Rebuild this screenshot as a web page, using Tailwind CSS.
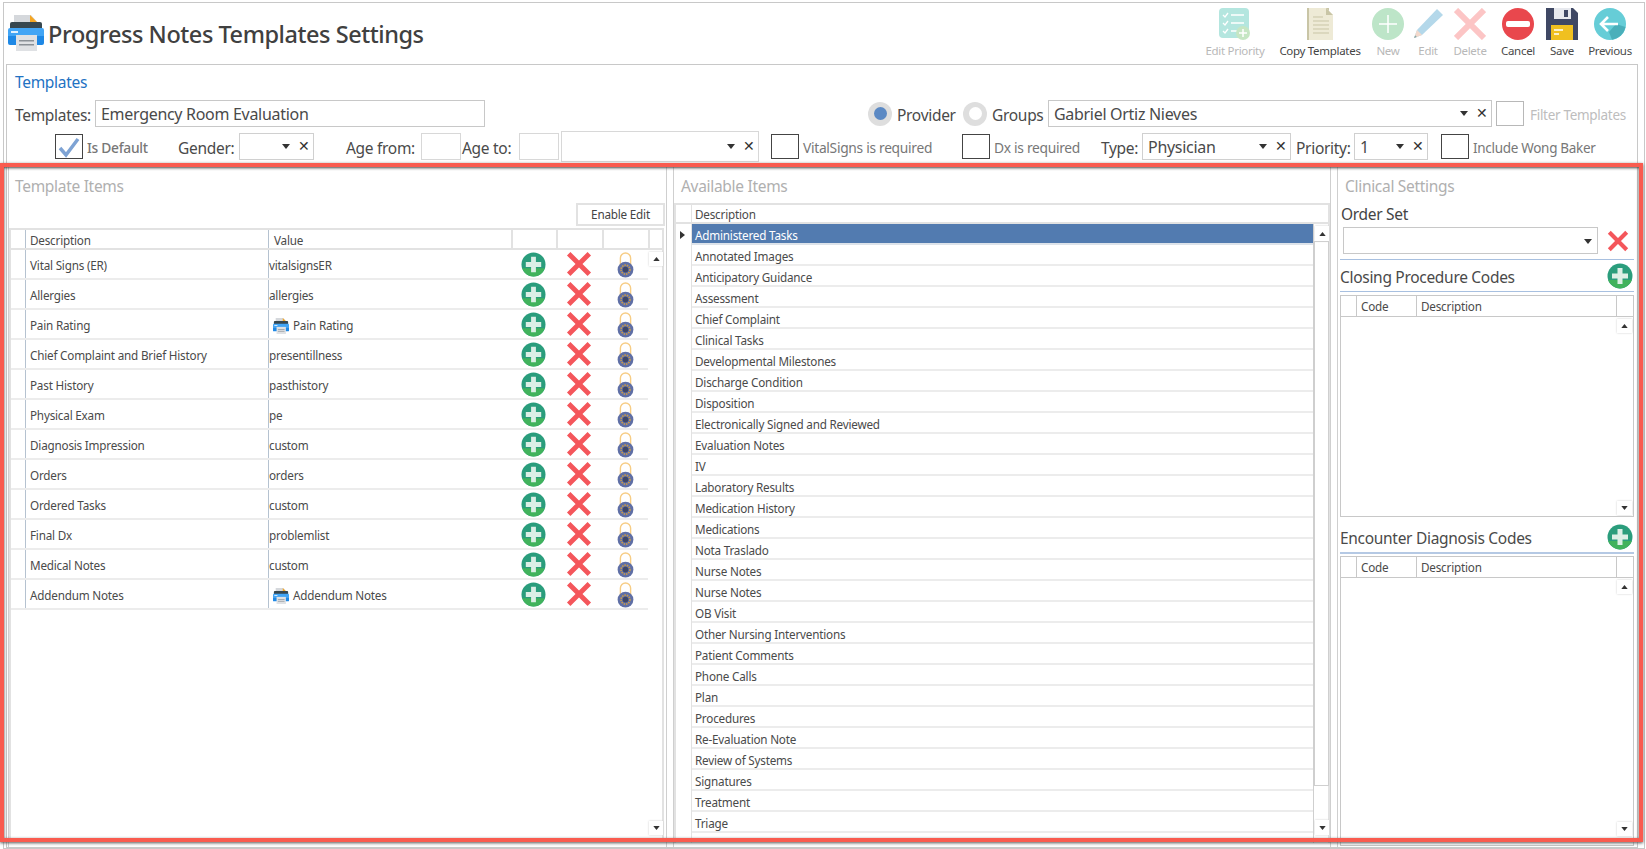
<!DOCTYPE html>
<html lang="en">
<head>
<meta charset="UTF-8" />
<title>Progress Notes Templates Settings</title>
<script src="https://cdn.jsdelivr.net/npm/@tailwindcss/browser@4"></script>
</head>
<body class="bg-white">
<svg width="0" height="0" class="absolute">
  <defs>
    <symbol id="printer" viewBox="0 0 36 36">
      <path d="M6 0h17l8 9v10H6z" fill="#d5d8dc"/>
      <path d="M22 0l9 9h-9z" fill="#f5a623"/>
      <rect x="2" y="7" width="32" height="9" rx="2" fill="#37474f"/>
      <path d="M0 15a2 2 0 0 1 2-2h32a2 2 0 0 1 2 2v6H0z" fill="#42a5f5"/>
      <path d="M0 21h36v7a2 2 0 0 1-2 2H2a2 2 0 0 1-2-2z" fill="#1e88e5"/>
      <rect x="3" y="16" width="7" height="2" fill="#e3f2fd"/>
      <rect x="8" y="20" width="21" height="16" fill="#dfe1e4"/>
      <rect x="11" y="25" width="15" height="1.5" fill="#8a9096"/>
      <rect x="11" y="29" width="15" height="1.5" fill="#8a9096"/>
    </symbol>
    <symbol id="plus" viewBox="0 0 26 26">
      <circle cx="13" cy="13" r="12.5" fill="#2a9d7c"/>
      <path d="M1.2 17h23.6A12.5 12.5 0 0 1 1.2 17z" fill="#41b25c"/>
      <path d="M10.5 5h5v5.5H21v5h-5.5V21h-5v-5.5H5v-5h5.5z" fill="#dcefe6"/>
    </symbol>
    <symbol id="cross" viewBox="0 0 24 24">
      <path d="M2.5 2.5l19 19M21.500 2.500l-19 19" stroke="#f4565b" stroke-width="4.500" fill="none"/>
    </symbol>
    <symbol id="lock" viewBox="0 0 18 28">
      <path d="M3.500 14V6.500a5.500 5.500 0 0 1 11 0V14" fill="none" stroke="#f7cd85" stroke-width="1.500"/>
      <circle cx="9" cy="19" r="8.500" fill="#5f6fa6"/>
      <circle cx="9" cy="19" r="4.800" fill="none" stroke="#c99a4a" stroke-width="1.800" stroke-dasharray="1.600 1"/>
      <circle cx="9" cy="19" r="3" fill="#3d4668"/>
    </symbol>
    <symbol id="tri-up" viewBox="0 0 8 5"><path d="M4 0l4 5H0z" fill="#333"/></symbol>
    <symbol id="tri-down" viewBox="0 0 8 5"><path d="M0 0h8L4 5z" fill="#333"/></symbol>
  </defs>
</svg>

<div class="relative w-[1646px] h-[849px] overflow-hidden font-['Noto_Sans','Open_Sans',sans-serif] text-[#4a4a4a]">
  <div class="ml-[3px] mt-[2px] w-[1642px] h-[847px] border border-[#c8c8c8] flex flex-col">

    <!-- header -->
    <div class="h-[61px] flex shrink-0">
      <svg class="w-[36px] h-[36px] ml-[4px] mt-[12px]"><use href="#printer"/></svg>
      <h1 class="ml-[4px] mt-[13px] text-[23.500px] leading-[36px] font-medium text-[#404040] tracking-[-0.45px]">Progress Notes Templates Settings</h1>
      <div class="ml-auto mr-[3px] flex text-[11.500px] leading-[14px] tracking-[-0.3px]">
        <div class="w-[72px] flex flex-col items-center text-[#b8b8b8]">
          <svg class="w-[32px] h-[32px] mt-[5px]" viewBox="0 0 32 32">
            <rect x="0" y="0" width="30" height="30" rx="4" fill="#b4e6df"/>
            <path d="M4 7l2 2 3-4M4 15l2 2 3-4M4 23l2 2 3-4" stroke="#fff" stroke-width="1.300" fill="none"/>
            <path d="M12 7h13M12 15h13M12 23h6" stroke="#fff" stroke-width="1.300"/>
            <circle cx="24" cy="25" r="7" fill="#c6e6c4"/>
            <path d="M24 21v8M20 25h8" stroke="#fff" stroke-width="1.500"/>
          </svg>
          <span class="mt-[4px]">Edit Priority</span>
        </div>
        <div class="w-[98px] flex flex-col items-center text-[#444]">
          <svg class="w-[27px] h-[32px] mt-[5px]" viewBox="0 0 27 32">
            <rect x="0" y="0" width="22" height="32" fill="#c9c5a6"/>
            <path d="M2 0h17l7 7v25H2z" fill="#eeead6"/>
            <path d="M19 0l7 7h-7z" fill="#c9c5a6"/>
            <path d="M6 9h10M6 13h16M6 17h16M6 21h16M6 25h16" stroke="#c9c5a6" stroke-width="1"/>
          </svg>
          <span class="mt-[4px]">Copy Templates</span>
        </div>
        <div class="w-[38px] flex flex-col items-center text-[#b8b8b8]">
          <svg class="w-[32px] h-[32px] mt-[5px]" viewBox="0 0 32 32">
            <circle cx="16" cy="16" r="16" fill="#bde5c8"/>
            <path d="M16 7v18M7 16h18" stroke="#fff" stroke-width="1.500"/>
          </svg>
          <span class="mt-[4px]">New</span>
        </div>
        <div class="w-[42px] flex flex-col items-center text-[#b8b8b8]">
          <svg class="w-[32px] h-[32px] mt-[5px]" viewBox="0 0 32 32">
            <path d="M25 1l6 6L10 27 2 30l3-8z" fill="#b4d8ea"/>
            <path d="M5 22l5 5-8 3z" fill="#f3d9cc"/>
            <path d="M3.200 27.300L2 30l2.900-1.100z" fill="#8aa"/>
          </svg>
          <span class="mt-[4px]">Edit</span>
        </div>
        <div class="w-[42px] flex flex-col items-center text-[#b8b8b8]">
          <svg class="w-[32px] h-[32px] mt-[5px]" viewBox="0 0 32 32">
            <path d="M2 2l28 28M30 2L2 30" stroke="#fcc5c5" stroke-width="6" fill="none"/>
          </svg>
          <span class="mt-[4px]">Delete</span>
        </div>
        <div class="w-[54px] flex flex-col items-center">
          <svg class="w-[32px] h-[32px] mt-[5px]" viewBox="0 0 32 32">
            <circle cx="16" cy="16" r="16" fill="#e9474d"/>
            <rect x="4" y="13" width="24" height="6" rx="2" fill="#fff"/>
          </svg>
          <span class="mt-[4px]">Cancel</span>
        </div>
        <div class="w-[34px] flex flex-col items-center">
          <svg class="w-[32px] h-[32px] mt-[5px]" viewBox="0 0 32 32">
            <path d="M0 0h27l5 5v27H0z" fill="#3f4864"/>
            <rect x="8" y="0" width="17" height="11" fill="#e7e9ee"/>
            <rect x="18" y="2" width="4" height="7" fill="#3f4864"/>
            <rect x="5" y="17" width="22" height="15" fill="#f0c020"/>
            <path d="M8 22h9M8 26h5" stroke="#fff" stroke-width="1.300"/>
          </svg>
          <span class="mt-[4px]">Save</span>
        </div>
        <div class="w-[62px] flex flex-col items-center">
          <svg class="w-[32px] h-[32px] mt-[5px]" viewBox="0 0 32 32">
            <circle cx="16" cy="16" r="16" fill="#66cdd7"/>
            <path d="M15 24l7-8 9.500 3A16 16 0 0 1 18 31.800z" fill="#4aafba"/>
            <path d="M14 9l-7 7 7 7M7 16h17" stroke="#fff" stroke-width="2.600" fill="none"/>
          </svg>
          <span class="mt-[4px]">Previous</span>
        </div>
      </div>
    </div>

    <!-- templates box -->
    <div class="ml-[2px] w-[1632px] flex-1 border border-[#c8c8c8] min-h-0">
      <div class="h-[102px] text-[15.500px] leading-[20px] tracking-[-0.3px]">
        <div class="pl-[8px] pt-[7px] text-[#2272c3]">Templates</div>

        <div class="mt-[8px] flex items-center h-[27px] pl-[8px]">
          <span class="w-[80px] pt-[2px]">Templates:</span>
          <div class="w-[390px] h-[27px] border border-[#c8c8c8] pl-[5px] leading-[27px] text-[16px]">Emergency Room Evaluation</div>
          <span class="ml-[383px] w-[24px] h-[24px] rounded-full bg-[#dedede] flex items-center justify-center"><span class="w-[13px] h-[13px] rounded-full bg-[#5b89c4]"></span></span>
          <span class="ml-[5px] w-[66px] pt-[2px]">Provider</span>
          <span class="w-[24px] h-[24px] rounded-full bg-[#dedede] flex items-center justify-center"><span class="w-[13px] h-[13px] rounded-full bg-white"></span></span>
          <span class="ml-[5px] w-[56px] pt-[2px]">Groups</span>
          <div class="relative w-[444px] h-[27px] border border-[#c8c8c8] pl-[5px] leading-[27px] text-[16px]">Gabriel Ortiz Nieves
            <svg class="absolute right-[23px] top-[10px] w-[8px] h-[5px]"><use href="#tri-down"/></svg>
            <span class="absolute right-[3px] top-[2px] text-[14px] leading-[20px] text-[#333]">✕</span>
          </div>
          <span class="ml-[4px] w-[28px] h-[25px] border border-[#b8b8b8]"></span>
          <span class="ml-[6px] pt-[2px] text-[13.500px] text-[#bdbdbd]">Filter Templates</span>
        </div>

        <div class="mt-[6px] flex items-center h-[27px] pl-[48px]">
          <span class="w-[28px] h-[25px] border border-[#444] flex items-center justify-center">
            <svg class="w-[24px] h-[22px]" viewBox="0 0 24 22"><path d="M3 12l6 7L21 3" stroke="#7ea3d4" stroke-width="3.500" fill="none"/></svg>
          </span>
          <span class="ml-[4px] w-[91px] pt-[2px] text-[13.800px] text-[#777] font-medium">Is Default</span>
          <span class="w-[61px] pt-[2px]">Gender:</span>
          <div class="relative w-[75px] h-[27px] border border-[#d0d0d0]">
            <svg class="absolute right-[23px] top-[10px] w-[8px] h-[5px]"><use href="#tri-down"/></svg>
            <span class="absolute right-[3px] top-[2px] text-[14px] leading-[20px] text-[#333]">✕</span>
          </div>
          <span class="ml-[32px] w-[75px] pt-[2px]">Age from:</span>
          <span class="w-[40px] h-[27px] border border-[#d8d8d8]"></span>
          <span class="ml-[1px] w-[57px] pt-[2px]">Age to:</span>
          <span class="w-[40px] h-[27px] border border-[#d8d8d8]"></span>
          <div class="relative ml-[2px] w-[198px] h-[31px] border border-[#d8d8d8]">
            <svg class="absolute right-[23px] top-[12px] w-[8px] h-[5px]"><use href="#tri-down"/></svg>
            <span class="absolute right-[3px] top-[4px] text-[14px] leading-[20px] text-[#333]">✕</span>
          </div>
          <span class="ml-[12px] w-[28px] h-[25px] border border-[#444]"></span>
          <span class="ml-[4px] w-[159px] pt-[2px] text-[13.800px] text-[#777]">VitalSigns is required</span>
          <span class="w-[28px] h-[25px] border border-[#444]"></span>
          <span class="ml-[4px] w-[107px] pt-[2px] text-[13.800px] text-[#777]">Dx is required</span>
          <span class="w-[41px] pt-[2px]">Type:</span>
          <div class="relative w-[149px] h-[27px] border border-[#d0d0d0] pl-[5px] leading-[27px] text-[16px]">Physician
            <svg class="absolute right-[23px] top-[10px] w-[8px] h-[5px]"><use href="#tri-down"/></svg>
            <span class="absolute right-[3px] top-[2px] text-[14px] leading-[20px] text-[#333]">✕</span>
          </div>
          <span class="ml-[5px] w-[58px] pt-[2px]">Priority:</span>
          <div class="relative w-[74px] h-[27px] border border-[#d0d0d0] pl-[5px] leading-[27px] text-[16px]">1
            <svg class="absolute right-[23px] top-[10px] w-[8px] h-[5px]"><use href="#tri-down"/></svg>
            <span class="absolute right-[3px] top-[2px] text-[14px] leading-[20px] text-[#333]">✕</span>
          </div>
          <span class="ml-[13px] w-[28px] h-[25px] border border-[#444]"></span>
          <span class="ml-[4px] pt-[2px] text-[13.500px] text-[#777]">Include Wong Baker</span>
        </div>
      </div>

      <!-- panels -->
      <div class="flex h-[680px] text-[11.700px] tracking-[-0.2px]">
        <!-- template items -->
        <div class="w-[659px] ml-[1px] border-r border-l border-[#cfcfcf] relative">
          <div class="pl-[6px] pt-[7px] h-[34px] text-[15.500px] leading-[24px] text-[#b0b0b0] tracking-[-0.3px]">Template Items</div>
          <div class="flex justify-end pr-[1px] h-[24px] mt-[2px]">
            <div class="w-[89px] h-[23px] border-2 border-[#e2e2e2] text-center leading-[19px] text-[#444]">Enable Edit</div>
          </div>
          <div class="w-[655px] h-[610px] mt-[1px] border-2 border-b-0 border-[#e2e2e2]">
            <div id="ti-head" class="flex h-[18px] leading-[21px] border-b-2 border-[#e2e2e2] box-content">
              <div class="w-[14px]"></div>
              <div class="w-[243px] pl-[4px] border-l border-[#b5c2d0]">Description</div>
              <div class="w-[243px] pl-[5px] border-l border-[#b5c2d0]">Value</div>
              <div class="w-[45px] border-l-2 border-[#e2e2e2]"></div>
              <div class="w-[46px] border-l-2 border-[#e2e2e2]"></div>
              <div class="w-[46px] border-l-2 border-[#e2e2e2]"></div>
              <div class="flex-1 border-l-2 border-[#e2e2e2]"></div>
            </div>
            <div class="relative flex h-[586px]">
              <div id="ti-rows" class="w-[637px]"></div>
              <div class="relative flex-1">
                <div class="absolute left-[1px] top-[2px] w-[14px] h-[14px] bg-white shadow-[0_0_2px_#ccc] flex items-center justify-center"><svg class="w-[7px] h-[4px]"><use href="#tri-up"/></svg></div>
                <div class="absolute left-[1px] top-[571px] w-[14px] h-[14px] bg-white shadow-[0_0_2px_#ccc] flex items-center justify-center"><svg class="w-[7px] h-[4px]"><use href="#tri-down"/></svg></div>
              </div>
            </div>
          </div>
        </div>

        <!-- available items -->
        <div class="w-[658px] ml-[6px] border-x border-[#cfcfcf] relative">
          <div class="pl-[7px] pt-[7px] h-[34px] text-[15.500px] leading-[24px] text-[#b0b0b0] tracking-[-0.3px]">Available Items</div>
          <div class="mt-[2px] w-[656px] h-[640px] border-x-2 border-t-2 border-[#e2e2e2]">
            <div class="flex h-[17px] leading-[18px] border-b-2 border-[#e2e2e2] box-content">
              <div class="w-[15px]"></div>
              <div class="flex-1 pl-[3px] border-l border-[#e2e2e2]">Description</div>
            </div>
            <div class="flex h-[619px]">
              <div class="w-[15px] pt-[7px] pl-[4px]">
                <svg class="w-[5px] h-[8px]" viewBox="0 0 5 8"><path d="M0 0l5 4-5 4z" fill="#333"/></svg>
              </div>
              <div id="ai-rows" class="w-[622px] border-l border-[#e2e2e2]"></div>
              <div class="relative flex-1 border-l border-[#cfcfcf]">
                <div class="absolute left-[1px] top-[2px] w-[14px] h-[15px] bg-white shadow-[0_0_2px_#ccc] flex items-center justify-center"><svg class="w-[7px] h-[4px]"><use href="#tri-up"/></svg></div>
                <div class="absolute left-0 top-[17px] w-[15px] h-[545px] border border-[#cfcfcf]"></div>
                <div class="absolute left-[1px] top-[596px] w-[14px] h-[15px] bg-white shadow-[0_0_2px_#ccc] flex items-center justify-center"><svg class="w-[7px] h-[4px]"><use href="#tri-down"/></svg></div>
              </div>
            </div>
          </div>
        </div>

        <!-- clinical settings -->
        <div class="w-[299px] ml-[6px] border-l border-[#cfcfcf]">
          <div class="pl-[7px] pt-[7px] h-[34px] text-[15.500px] leading-[24px] text-[#b0b0b0] tracking-[-0.3px]">Clinical Settings</div>
          <div class="pl-[3px] pt-[1px] h-[26px] text-[15.500px] leading-[24px] text-[#444] tracking-[-0.3px]">Order Set</div>
          <div class="flex items-center h-[27px] ml-[5px]">
            <div class="relative w-[255px] h-[27px] border border-[#c8c8c8]">
              <svg class="absolute right-[5px] top-[11px] w-[8px] h-[5px]"><use href="#tri-down"/></svg>
            </div>
            <svg class="ml-[9px] w-[22px] h-[22px]"><use href="#cross"/></svg>
          </div>
          <div class="ml-[2px] w-[294px] mt-[5px] border-t border-[#a8c0e0]"></div>
          <div class="ml-[2px] w-[294px] h-[32px] flex items-center justify-between text-[15.500px] tracking-[-0.3px] border-b border-[#a8c0e0]">
            <span class="pt-[4px]">Closing Procedure Codes</span>
            <svg class="w-[26px] h-[26px] mr-[1px]"><use href="#plus"/></svg>
          </div>
          <div class="ml-[2px] w-[294px] h-[222px] mt-[3px] border border-[#c8c8c8]">
            <div class="flex h-[20px] leading-[20px] border-b border-[#c8c8c8] box-content">
              <div class="w-[15px]"></div>
              <div class="w-[60px] pl-[4px] border-l border-[#c8c8c8]">Code</div>
              <div class="w-[200px] pl-[4px] border-l border-[#c8c8c8]">Description</div>
              <div class="flex-1 border-l border-[#c8c8c8]"></div>
            </div>
            <div class="relative h-[199px]">
              <div class="absolute right-[1px] top-[2px] w-[15px] h-[14px] bg-white shadow-[0_0_2px_#ccc] flex items-center justify-center"><svg class="w-[7px] h-[4px]"><use href="#tri-up"/></svg></div>
              <div class="absolute right-[1px] top-[184px] w-[15px] h-[14px] bg-white shadow-[0_0_2px_#ccc] flex items-center justify-center"><svg class="w-[7px] h-[4px]"><use href="#tri-down"/></svg></div>
            </div>
          </div>
          <div class="ml-[2px] w-[294px] h-[37px] pt-[4px] flex items-center justify-between text-[15.500px] tracking-[-0.3px] border-b-2 border-[#b5c9e4]">
            <span class="pt-[4px]">Encounter Diagnosis Codes</span>
            <svg class="w-[26px] h-[26px] mr-[1px]"><use href="#plus"/></svg>
          </div>
          <div class="ml-[2px] w-[294px] h-[290px] mt-[2px] border border-[#c8c8c8]">
            <div class="flex h-[20px] leading-[20px] border-b border-[#c8c8c8] box-content">
              <div class="w-[15px]"></div>
              <div class="w-[60px] pl-[4px] border-l border-[#c8c8c8]">Code</div>
              <div class="w-[200px] pl-[4px] border-l border-[#c8c8c8]">Description</div>
              <div class="flex-1 border-l border-[#c8c8c8]"></div>
            </div>
            <div class="relative h-[260px]">
              <div class="absolute right-[1px] top-[2px] w-[15px] h-[14px] bg-white shadow-[0_0_2px_#ccc] flex items-center justify-center"><svg class="w-[7px] h-[4px]"><use href="#tri-up"/></svg></div>
              <div class="absolute right-[1px] top-[244px] w-[15px] h-[14px] bg-white shadow-[0_0_2px_#ccc] flex items-center justify-center"><svg class="w-[7px] h-[4px]"><use href="#tri-down"/></svg></div>
            </div>
          </div>
        </div>
      </div>
    </div>
  </div>

  <!-- highlight drawn over the screenshot -->
  <div class="absolute left-0 top-[163px] w-[1643px] h-[679px] border-4 border-[#f95b4f] shadow-[0_1px_3px_#555,inset_0_1px_3px_#444] pointer-events-none"></div>
</div>

<script>
  const templateItems = [
    ["Vital Signs (ER)", "vitalsignsER"],
    ["Allergies", "allergies"],
    ["Pain Rating", "Pain Rating", true],
    ["Chief Complaint and Brief History", "presentillness"],
    ["Past History", "pasthistory"],
    ["Physical Exam", "pe"],
    ["Diagnosis Impression", "custom"],
    ["Orders", "orders"],
    ["Ordered Tasks", "custom"],
    ["Final Dx", "problemlist"],
    ["Medical Notes", "custom"],
    ["Addendum Notes", "Addendum Notes", true]
  ];

  const availableItems = ["Administered Tasks", "Annotated Images", "Anticipatory Guidance", "Assessment", "Chief Complaint",
    "Clinical Tasks", "Developmental Milestones", "Discharge Condition", "Disposition", "Electronically Signed and Reviewed",
    "Evaluation Notes", "IV", "Laboratory Results", "Medication History", "Medications", "Nota Traslado", "Nurse Notes",
    "Nurse Notes", "OB Visit", "Other Nursing Interventions", "Patient Comments", "Phone Calls", "Plan", "Procedures",
    "Re-Evaluation Note", "Review of Systems", "Signatures", "Treatment", "Triage"];

  document.getElementById("ti-rows").innerHTML = templateItems.map(([name, value, isPrint]) => `
    <div class="flex h-[30px] border-b-2 border-[#ececec]">
      <div class="w-[14px]"></div>
      <div class="w-[243px] pl-[4px] leading-[31px] border-l border-[#b5c2d0]">${name}</div>
      <div class="w-[243px] pt-[3px] border-l border-[#b5c2d0] flex items-center ${isPrint ? "pl-[4px]" : "pl-0"}">
        ${isPrint ? '<svg class="w-[16px] h-[16px] mr-[4px]"><use href="#printer"/></svg>' : ""}${value}
      </div>
      <div class="w-[45px] flex items-center justify-center"><svg class="w-[25px] h-[25px] mt-[1px]"><use href="#plus"/></svg></div>
      <div class="w-[46px] flex items-center justify-center"><svg class="w-[26px] h-[26px]"><use href="#cross"/></svg></div>
      <div class="w-[46px] flex items-center justify-center"><svg class="w-[17px] h-[26px] mt-[1px]"><use href="#lock"/></svg></div>
    </div>`).join("");

  document.getElementById("ai-rows").innerHTML = availableItems.map((name, i) => `
    <div class="h-[21px] leading-[23px] pl-[3px] border-b-2 ${i === 0 ? "bg-[#527bb0] text-white border-[#dde3ea]" : "border-[#ececec]"}">${name}</div>`).join("");
</script>
</body>
</html>
